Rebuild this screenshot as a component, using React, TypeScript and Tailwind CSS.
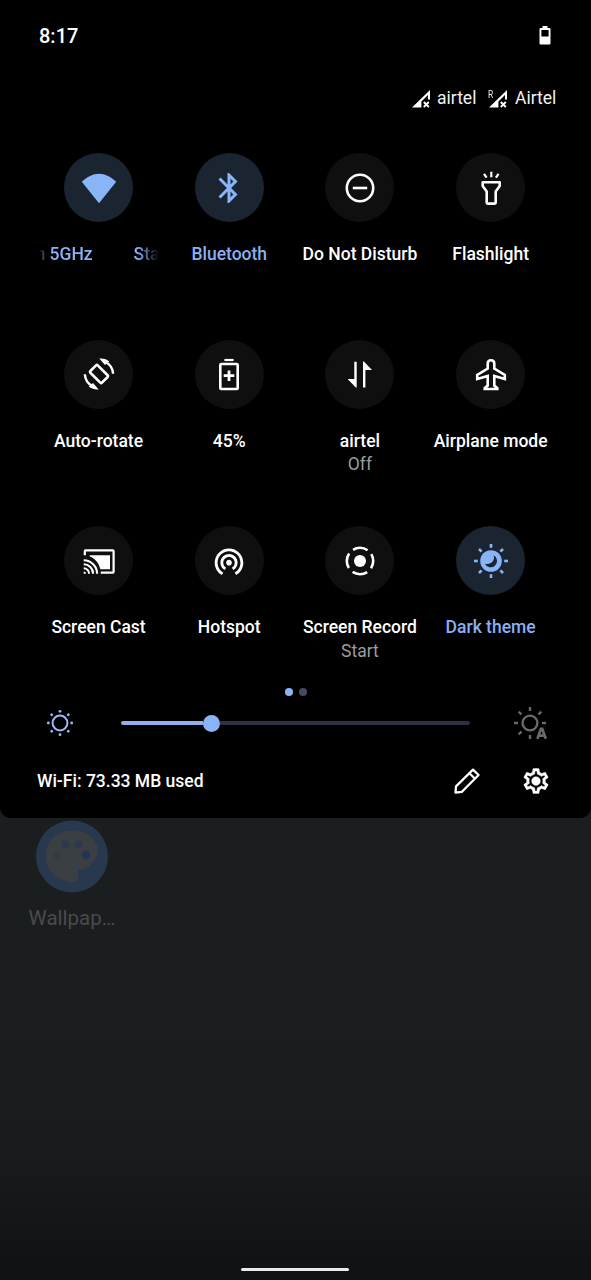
import type { ReactNode } from "react";

function Glyph({ children }: { children: ReactNode }) {
  return (
    <svg viewBox="-20 -20 40 40" className="h-10 w-10" fill="none" stroke="currentColor" strokeWidth={2.6}>
      {children}
    </svg>
  );
}

const rays = [0, 45, 90, 135, 180, 225, 270, 315];

const wifi = (
  <Glyph>
    <path stroke="none" fill="currentColor" d="M0 15.2-17.2-6.2C-12-11.2-6-14.3 0-14.3S12-11.2 17.2-6.2Z" />
  </Glyph>
);

const bluetooth = (
  <Glyph>
    <path
      stroke="none"
      fill="currentColor"
      transform="scale(1.5) translate(-12 -12)"
      d="M17.71 7.71 12 2h-1v7.59L6.41 5 5 6.41 10.59 12 5 17.59 6.41 19 11 14.41V22h1l5.71-5.71-4.3-4.29 4.3-4.29zM13 5.83l1.88 1.88L13 9.59V5.83zm1.88 10.46L13 18.17v-3.76l1.88 1.88z"
    />
  </Glyph>
);

const dnd = (
  <Glyph>
    <circle r="13.2" />
    <path d="M-7.2 0H7.2" />
  </Glyph>
);

const flashlight = (
  <Glyph>
    <path strokeLinejoin="round" d="M-8.3-5.8H8.7V-2L4.7 3.4V14.6Q4.7 15.6 3.7 15.6H-3.3Q-4.3 15.6-4.3 14.6V3.4L-8.3-2Z" />
    <path strokeWidth="2.2" d="M.3-16.2V-10.8M-7-14.2-4.4-10.3M7.5-14.2 4.9-10.3" />
  </Glyph>
);

const rotate = (
  <Glyph>
    <rect x="-5.2" y="-8.2" width="10.4" height="16.4" rx="1.2" transform="rotate(-45)" />
    {[0, 180].map((a) => (
      <g key={a} transform={`rotate(${a})`}>
        <path strokeWidth="2.4" d="M6.6-12A14 14 0 0 1 14.1-.2" />
        <path stroke="none" fill="currentColor" d="M.3-15.4C4.5-15.8 8-14.6 10.2-12.6L6-8.9Z" />
      </g>
    ))}
  </Glyph>
);

const battery = (
  <Glyph>
    <rect x="-8.7" y="-10" width="17.4" height="25" rx="1" />
    <path strokeWidth="2.2" d="M-4.6-14H4.6" />
    <path strokeWidth="2.8" d="M-5.3 1.7H5.3M0-3.6V7" />
  </Glyph>
);

const data = (
  <Glyph>
    <path
      stroke="none"
      fill="currentColor"
      d="M-5.7-12.3H-3.3V13.6H-4.2L-12.4 4.9H-5.7ZM5.4 13.4H3V-12.4H3.9L12-4H5.4Z"
    />
  </Glyph>
);

const airplane = (
  <Glyph>
    <path d="M0-13.8C2.1-13.8 3.3-12.6 3.3-10.6V-5.5L13.8 1V5L3.3 2V11.6L6.3 14.2V15H-6.3V14.2L-3.3 11.6V2L-13.8 5V1L-3.3-5.5V-10.6C-3.3-12.6-2.1-13.8 0-13.8Z" />
  </Glyph>
);

const cast = (
  <Glyph>
    <path strokeWidth="2.2" d="M-14.2-5.8V-9.8Q-14.2-10.6-13.4-10.6H13.8Q14.6-10.6 14.6-9.8V10.8Q14.6 11.6 13.8 11.6H1.7" />
    <path stroke="none" fill="currentColor" d="M-9.3-5.8H11V8.2H1.4C-.5 1.4-4.3-2.6-9.3-4.4Z" />
    <path strokeWidth="2.1" d="M-15.3-.7A13.4 13.4 0 0 1-1.9 12.7M-15.3 3.3A9.4 9.4 0 0 1-5.9 12.7M-15.3 7.3A5.4 5.4 0 0 1-9.9 12.7" />
    <path stroke="none" fill="currentColor" d="M-15.3 10.4A2.3 2.3 0 0 1-13 12.7H-15.3Z" />
  </Glyph>
);

const hotspot = (
  <Glyph>
    <path
      stroke="none"
      fill="currentColor"
      transform="translate(0 1.7) scale(1.43) translate(-12 -13)"
      d="M12 11c-1.1 0-2 .9-2 2s.9 2 2 2 2-.9 2-2-.9-2-2-2zm6 2c0-3.31-2.69-6-6-6s-6 2.69-6 6c0 2.22 1.21 4.15 3 5.19l1-1.74c-1.19-.7-2-1.97-2-3.45 0-2.21 1.79-4 4-4s4 1.79 4 4c0 1.48-.81 2.75-2 3.45l1 1.74c1.79-1.04 3-2.97 3-5.19zM12 3C6.48 3 2 7.48 2 13c0 3.7 2.01 6.92 4.99 8.65l1-1.73C5.61 18.53 4 15.96 4 13c0-4.42 3.58-8 8-8s8 3.58 8 8c0 2.96-1.61 5.53-4 6.92l1 1.73c2.99-1.73 5-4.95 5-8.65 0-5.52-4.48-10-10-10z"
    />
  </Glyph>
);

const record = (
  <Glyph>
    <circle r="6" stroke="none" fill="currentColor" />
    <circle r="13.2" strokeDasharray="15.4 5.335" strokeDashoffset="7.7" />
  </Glyph>
);

const dark = (
  <Glyph>
    <circle r="10.8" stroke="none" fill="currentColor" />
    <path stroke="none" fill="#1b2431" d="M2.7-5.7A6.4 6.4 0 1 1-6.2 2.5C-1.5 4.4 4.6.8 2.7-5.7Z" />
    {rays.map((a) => (
      <path key={a} d="M13.2 0H17" transform={`rotate(${a})`} />
    ))}
  </Glyph>
);

type Tile = { icon: ReactNode; label: ReactNode; sub?: string; on?: boolean };

const scrollingName = (
  <span className="flex w-[120px] overflow-hidden text-left [mask-image:linear-gradient(90deg,transparent,#000_10%,#000_82%,transparent)]">
    <span className="-ml-[3px] w-[14px] shrink-0">n</span>
    <span className="w-[84px] shrink-0">5GHz</span>
    <span className="shrink-0">Sta</span>
  </span>
);

const tiles: Tile[] = [
  { icon: wifi, label: scrollingName, on: true },
  { icon: bluetooth, label: "Bluetooth", on: true },
  { icon: dnd, label: "Do Not Disturb" },
  { icon: flashlight, label: "Flashlight" },
  { icon: rotate, label: "Auto-rotate" },
  { icon: battery, label: "45%" },
  { icon: data, label: "airtel", sub: "Off" },
  { icon: airplane, label: "Airplane mode" },
  { icon: cast, label: "Screen Cast" },
  { icon: hotspot, label: "Hotspot" },
  { icon: record, label: "Screen Record", sub: "Start" },
  { icon: dark, label: "Dark theme", on: true },
];

function QuickTile({ icon, label, sub, on }: Tile) {
  return (
    <button className="flex flex-col items-center whitespace-nowrap text-[17.5px] leading-6">
      <span
        className={
          on
            ? "flex size-[69px] items-center justify-center rounded-full bg-[#1b2431] text-[#8ab4f8]"
            : "flex size-[69px] items-center justify-center rounded-full bg-[#0f0f0f] text-white"
        }
      >
        {icon}
      </span>
      <span className={on ? "mt-5 font-medium text-[#8ab0f3]" : "mt-5 font-medium text-white"}>{label}</span>
      {sub && <span className="-mt-[0.5px] text-[#9c9c9c]">{sub}</span>}
    </button>
  );
}

function Signal() {
  return (
    <svg viewBox="0 0 18 18" className="h-[18px] w-[18px]">
      <path fill="#fff" d="M0 17.5 18 0V9.5H16V5L9.4 11.4V17.5Z" />
      <path stroke="#fff" strokeWidth="1.9" d="m11.8 12 5 5m0-5-5 5" />
    </svg>
  );
}

export default function App() {
  return (
    <div className="flex h-[1280px] w-full flex-col overflow-hidden bg-[linear-gradient(180deg,#1b1e1f_0%,#1b1e1f_80%,#191b1c_90%,#111214_99%)] font-['Roboto',sans-serif]">
      <section className="flex h-[818px] shrink-0 flex-col rounded-b-[11px] bg-black text-white">
        <header className="flex h-[71px] shrink-0 items-center justify-between pr-10 pl-[39px]">
          <span className="text-[20px] font-medium">8:17</span>
          <svg viewBox="0 0 12 20" className="h-5 w-3">
            <path
              fill="#fff"
              fillRule="evenodd"
              d="M3.5.0h5v2H10.5Q11.5 2 11.5 3V17.5Q11.5 18.5 10.5 18.5H1.5Q.5 18.5 .5 17.5V3Q.5 2 1.5 2H3.5ZM2.4 4V10.5H9.6V4Z"
            />
          </svg>
        </header>
        <div className="flex h-[55px] shrink-0 items-center justify-end pr-[35px] text-[17.5px] text-[#f1f1f1]">
          <Signal />
          <span className="ml-[7px] w-[39px]">airtel</span>
          <span className="relative ml-[13px] flex">
            <span className="absolute top-0 -left-px origin-left scale-x-[0.8] text-[10.5px] leading-[10px]">R</span>
            <Signal />
          </span>
          <span className="ml-2 w-[41px]">Airtel</span>
        </div>

        <main className="mt-[27px] ml-[33.2px] grid h-[525px] w-[522.8px] shrink-0 auto-rows-[186.7px] grid-cols-4">
          {tiles.map((tile, i) => (
            <QuickTile key={i} {...tile} />
          ))}
        </main>

        <div className="flex h-[27px] shrink-0 items-center justify-center gap-1.5">
          <span className="size-2 rounded-full bg-[#8ab4f8]" />
          <span className="size-2 rounded-full bg-[#434c5e]" />
        </div>

        <div className="flex h-9 shrink-0 items-center pl-10">
          <svg viewBox="-20 -20 40 40" className="h-10 w-10 shrink-0 text-[#9db8f5]" fill="none" stroke="currentColor">
            <circle r="7.4" strokeWidth="2" />
            {rays.map((a) => (
              <circle key={a} cx="11.7" r="1.4" stroke="none" fill="currentColor" transform={`rotate(${a})`} />
            ))}
          </svg>
          <div className="ml-[41px] flex w-[349px] items-center">
            <span className="h-1 w-[81.5px] rounded-l-full bg-[#8fb0ec]" />
            <span className="size-[17px] rounded-full bg-[#8ab4f8]" />
            <span className="h-1 flex-1 rounded-r-full bg-[#2e3142]" />
          </div>
          <svg viewBox="-20 -20 40 40" className="ml-10 h-10 w-10 shrink-0 text-[#6a6a6a]" fill="none" stroke="currentColor">
            <circle r="7.4" strokeWidth="2.4" />
            {rays
              .filter((a) => a !== 45)
              .map((a) => (
                <path key={a} d="M12 0H16" strokeWidth="2.4" transform={`rotate(${a})`} />
              ))}
            <path strokeWidth="2.7" d="M7.4 15.8 11 5.8H12.2L15.8 15.8M8.7 12.6H14.5" />
          </svg>
        </div>

        <footer className="flex h-[77px] shrink-0 items-center pt-[3px] pl-[37px]">
          <span className="w-[410px] text-[17.5px] font-medium">Wi-Fi: 73.33 MB used</span>
          <svg viewBox="-20 -20 40 40" className="h-10 w-10" fill="none" stroke="#fff" strokeWidth="2.2" strokeLinejoin="round">
            <path d="M-11.5 11.6-11 5.4 6-11.4 11.6-6-5.2 10.9ZM2.4-7.8 8-2.3" />
          </svg>
          <svg viewBox="0 0 24 24" className="ml-[34px] h-[30px] w-[30px]" fill="#fff" stroke="#fff" strokeWidth="0.3">
            <path d="M19.43 12.98c.04-.32.07-.64.07-.98 0-.34-.03-.66-.07-.98l2.11-1.65c.19-.15.24-.42.12-.64l-2-3.46c-.09-.16-.26-.25-.44-.25-.06 0-.12.01-.17.03l-2.49 1c-.52-.4-1.08-.73-1.69-.98l-.38-2.65C14.46 2.18 14.25 2 14 2h-4c-.25 0-.46.18-.49.42l-.38 2.65c-.61.25-1.17.59-1.69.98l-2.49-1c-.06-.02-.12-.03-.18-.03-.17 0-.34.09-.43.25l-2 3.46c-.13.22-.07.49.12.64l2.11 1.65c-.04.32-.07.65-.07.98 0 .33.03.66.07.98l-2.11 1.65c-.19.15-.24.42-.12.64l2 3.46c.09.16.26.25.44.25.06 0 .12-.01.17-.03l2.49-1c.52.4 1.08.73 1.69.98l.38 2.65c.03.24.24.42.49.42h4c.25 0 .46-.18.49-.42l.38-2.65c.61-.25 1.17-.59 1.69-.98l2.49 1c.06.02.12.03.18.03.17 0 .34-.09.43-.25l2-3.46c.12-.22.07-.49-.12-.64l-2.11-1.65zm-1.98-1.71c.04.31.05.52.05.73 0 .21-.02.43-.05.73l-.14 1.13.89.7 1.08.84-.7 1.21-1.27-.51-1.04-.42-.9.68c-.43.32-.84.56-1.25.73l-1.06.43-.16 1.13-.2 1.35h-1.4l-.19-1.35-.16-1.13-1.06-.43c-.43-.18-.83-.41-1.23-.71l-.91-.7-1.06.43-1.27.51-.7-1.21 1.08-.84.89-.7-.14-1.13c-.03-.31-.05-.54-.05-.74s.02-.43.05-.73l.14-1.13-.89-.7-1.08-.84.7-1.21 1.27.51 1.04.42.9-.68c.43-.32.84-.56 1.25-.73l1.06-.43.16-1.13.2-1.35h1.39l.19 1.35.16 1.13 1.06.43c.43.18.83.41 1.23.71l.91.7 1.06-.43 1.27-.51.7 1.21-1.07.85-.89.7.14 1.13z" />
            <circle cx="12" cy="12" r="3.5" />
          </svg>
        </footer>
      </section>

      <section className="flex w-[144px] flex-1 flex-col items-center pt-[2px]">
        <svg viewBox="-36 -36 72 72" className="h-[73px] w-[72px]">
          <circle r="36" fill="#28384f" />
          <path
            fill="#3b3f43"
            d="M0-26C-15-26-26.500-15-26.500 0S-13 25.500 2 25.500C5.500 25.500 6.500 22 6 19C5.300 15.500 5.500 13 9 13C18 13.500 26-1 26-5C26-17 14-26 0-26Z"
          />
          <circle cx="-14.500" cy="-1.500" r="4" fill="#353a43" />
          <circle cx="-6.500" cy="-12" r="4" fill="#2d3a4e" />
          <circle cx="6.500" cy="-12" r="4" fill="#2d384b" />
          <circle cx="14" cy="-1.500" r="4.200" fill="#24344e" />
        </svg>
        <span className="mt-[10px] text-[20.5px] leading-[30px] text-[#484b4d]">Wallpap…</span>
      </section>

      <div className="mb-[9px] ml-[241px] h-[3px] w-[108px] rounded-full bg-[#e8eaed]" />
    </div>
  );
}
